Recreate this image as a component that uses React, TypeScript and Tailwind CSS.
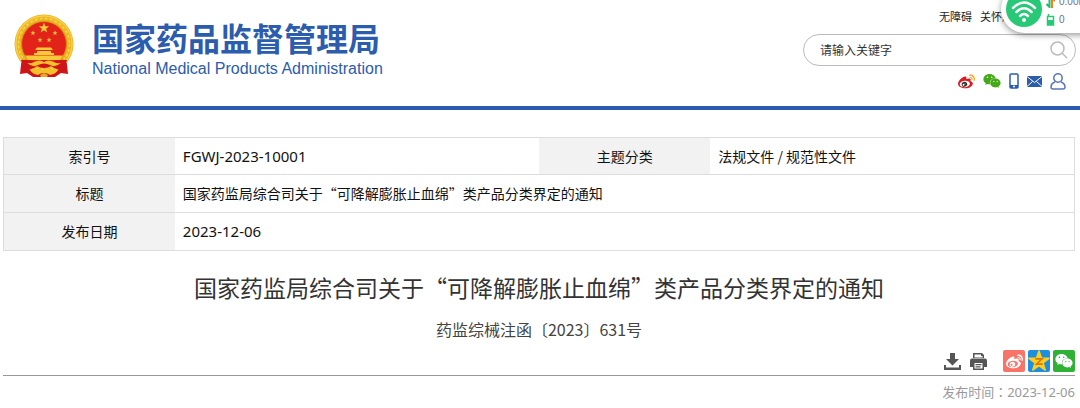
import React from "react";
import { FaWeixin } from "react-icons/fa";

type Row = {
  label: string;
  value: string;
};

const rows: Row[] = [
  { label: "标题", value: "国家药监局综合司关于“可降解膨胀止血绵”类产品分类界定的通知" },
];

const thClass = "w-[16%] bg-[#f2f2f2] text-center font-normal";
const tdClass = "px-2";
const latinClass = "font-['Noto_Sans','Noto_Sans_CJK_SC',sans-serif] text-[15px]";

const WEIBO_WAVES =
  "M407 177.6c7.6-24-13.4-46.8-37.4-41.7-22 4.8-28.8-28.1-7.1-32.8 50.1-10.9 92.3 37.1 76.5 84.8-6.8 21.2-38.8 10.8-32-10.3zM347.9 35.1c-25.9 5.6-16.8 43.7 8.3 38.3 72.3-15.2 134.8 52.8 111.7 124-7.4 24.2 29.1 37 37.4 12 31.9-99.8-55.1-195.9-157.4-174.3z";
const WEIBO_BODY =
  "M214.8 446.7C108.5 446.7 0 395.3 0 310.4c0-44.3 28-95.4 76.3-143.7C176 67 279.5 65.8 249.9 161c-4 13.1 12.3 5.7 12.3 6 79.5-33.6 140.5-16.8 114 51.4-3.7 9.4 1.1 10.9 8.3 13.1 135.7 42.3 34.8 215.2-169.7 215.2z";

type WeiboProps = {
  size: number;
  body: string;
  waves: string;
  eye: string;
  iris: string;
};

const WeiboIcon = ({ size, body, waves, eye, iris }: WeiboProps) => (
  <svg width={size} height={size} viewBox="0 20 512 440">
    <path d={WEIBO_BODY} fill={body} />
    <path d={WEIBO_WAVES} fill={waves} />
    <ellipse cx="205" cy="314" rx="154" ry="98" fill={eye} transform="rotate(-6 205 314)" />
    <ellipse cx="194" cy="324" rx="84" ry="74" fill={iris} transform="rotate(-20 194 324)" />
    <circle cx="168" cy="340" r="29" fill={eye} />
    <circle cx="214" cy="310" r="13" fill={eye} />
  </svg>
);

const STAR = "M0 -10L2.4 -3.2L9.5 -3.1L3.8 1.2L5.9 8.1L0 4L-5.9 8.1L-3.8 1.2L-9.5 -3.1L-2.4 -3.2Z";

const Emblem = () => (
  <svg className="h-[64px] w-[62px] shrink-0" viewBox="0 0 62 64">
    <path d="M9 42L7 60L14 59L20 63H42L48 59L55 60L53 42Z" fill="#cf1519" />
    <circle cx="31" cy="30" r="29.5" fill="#edb322" />
    <circle cx="31" cy="30" r="28" fill="none" stroke="#f8d044" strokeWidth="1.5" />
    <circle cx="31" cy="30" r="25.5" fill="none" stroke="#f9d653" strokeWidth="1.5" strokeDasharray="3 2" />
    <circle cx="31" cy="30" r="22.5" fill="#e2231a" stroke="#d9920f" strokeWidth="1" />
    <g fill="#f8c93a">
      <path d={STAR} transform="translate(31 14) scale(.55)" />
      <path d={STAR} transform="translate(20 19) scale(.27)" />
      <path d={STAR} transform="translate(42 19) scale(.27)" />
      <path d={STAR} transform="translate(27 26) scale(.27)" />
      <path d={STAR} transform="translate(36 26) scale(.27)" />
      <path d="M24 33.500H38L40 36H22Z" />
      <path d="M24 37H38V39H41V41H21V39H24Z" />
      <path d="M12 41.500H50L47 46H15Z" />
    </g>
    <path d="M8 46Q18 45 23 49Q31 43 39 49Q44 45 54 46L51 56Q43 56 38 52Q31 56 24 52Q19 56 11 56Z" fill="#cf1519" />
    <path d="M21 48Q27 45 31 48Q35 45 41 48Q44 50 48 49Q42 54 37 51Q31 48 25 51Q20 54 14 49Q18 50 21 48Z" fill="#f6c02b" />
    <path d="M17 56Q26 53 31 57Q36 53 45 56Q43 60 37 61Q31 56 25 61Q19 60 17 56Z" fill="#f6c02b" />
    <path d="M27 61Q31 58 35 61L34 63H28Z" fill="#e8a91e" />
  </svg>
);

const NetMonitor = () => (
  <div className="absolute top-[-15px] right-[-10px] flex h-12 w-[89px] items-center rounded-l-full bg-white pl-[5px] shadow-[0_2px_6px_rgba(0,0,0,0.4)]">
    <svg className="h-[36px] w-[36px] shrink-0" viewBox="0 0 36 36">
      <circle cx="18" cy="18" r="18" fill="#27c977" />
      <g fill="none" stroke="#fff" strokeWidth="2.5" strokeLinecap="round">
        <path d="M7 17Q18 6 29 17" />
        <path d="M10.500 21Q18 13.500 25.500 21" />
        <path d="M14 25Q18 21 22 25" />
      </g>
      <circle cx="18" cy="29" r="2" fill="#fff" />
    </svg>
    <div className="ml-1 flex flex-col gap-1 pt-1 font-['Liberation_Sans',sans-serif] text-[10px] leading-[14px] text-gray-500">
      <span className="flex items-center gap-1">
        <svg width="9" height="12" viewBox="0 0 9 12">
          <path d="M3.500 0V11L.5 8" fill="none" stroke="#27b96b" strokeWidth="2" />
          <path d="M6 12V2L9 5" fill="none" stroke="#f57c1f" strokeWidth="2" />
        </svg>
        0.00K
      </span>
      <span className="flex items-center gap-1">
        <svg width="9" height="12" viewBox="0 0 9 12">
          <path d="M2.500 0V2M1.500 2.500H7.500V11H1.500Z" fill="none" stroke="#27c977" strokeWidth="1.500" />
          <path d="M1 6H8V11H1Z" fill="#27c977" />
        </svg>
        0
      </span>
    </div>
  </div>
);

const Header = () => (
  <header className="relative flex h-[110px] items-start justify-between overflow-hidden border-b-4 border-[#2b5cad] pr-1 pl-[13px]">
    <a href="#" className="flex items-start gap-[17px] pt-[14px] text-[#2b5cad]">
      <Emblem />
      <span className="flex flex-col">
        <span className="text-[32px] leading-[46px] font-bold">国家药品监督管理局</span>
        <span className="font-['Liberation_Sans',sans-serif] text-[16px] leading-[18px]">
          National Medical Products Administration
        </span>
      </span>
    </a>
    <div className="flex w-[273px] flex-col">
      <nav className="flex gap-2 pt-2 pl-[136px] text-[11px] leading-4 whitespace-nowrap text-[#222]">
        <a href="#">无障碍</a>
        <a href="#">关怀版</a>
      </nav>
      <form className="mt-[10px] flex h-8 items-center rounded-full border border-[#bbb] pr-[7px] pl-4">
        <input
          type="text"
          aria-label="请输入关键字"
          placeholder="请输入关键字"
          className="min-w-0 flex-1 text-[12px] outline-none placeholder:text-[#333]"
        />
        <button type="button" aria-label="搜索">
          <svg width="18" height="18" viewBox="0 0 18 18" fill="none" stroke="#bbb" strokeWidth="1.500">
            <circle cx="7.500" cy="7.500" r="6.500" />
            <path d="M12 12L17 17" />
          </svg>
        </button>
      </form>
      <div className="mt-[6px] flex items-center justify-end gap-2 pr-[10px]">
        <a href="#" aria-label="微博">
          <WeiboIcon size={17} body="#dd1a1f" waves="#f0a928" eye="#fff" iris="#333" />
        </a>
        <a href="#" aria-label="微信" className="text-[#45a818]">
          <FaWeixin size={18} />
        </a>
        <a href="#" aria-label="手机">
          <svg width="10" height="16" viewBox="0 0 10 16">
            <rect x="1" y="1" width="8" height="14" rx="1" fill="none" stroke="#2b5cad" strokeWidth="1.500" />
            <path d="M1 12H9V15H1Z" fill="#2b5cad" />
            <circle cx="5" cy="13.500" r="1" fill="#fff" />
          </svg>
        </a>
        <a href="#" aria-label="邮箱">
          <svg width="15" height="11" viewBox="0 0 15 11">
            <path d="M0 0H15V11H0Z" fill="#2b5cad" />
            <path d="M0 .5L7.500 6.500L15 .5M0 10.500L5.500 5.500M15 10.500L9.500 5.500" fill="none" stroke="#fff" />
          </svg>
        </a>
        <a href="#" aria-label="个人中心">
          <svg width="16" height="17" viewBox="0 0 16 17" fill="none" stroke="#5b75b8" strokeWidth="1.500">
            <circle cx="8" cy="5" r="4.200" />
            <path d="M5 9Q1 10.500 1 14Q1 16 3 16H13Q15 16 15 14Q15 10.500 11 9" />
          </svg>
        </a>
      </div>
    </div>
    <NetMonitor />
  </header>
);

const InfoTable = () => (
  <table className="w-full table-fixed border-collapse border border-[#ddd] text-[14px] text-[#111]">
    <tbody>
      <tr className="h-[37px] border-b border-[#ddd]">
        <th scope="row" className={thClass}>索引号</th>
        <td className={`${tdClass} ${latinClass} w-[34%]`}>FGWJ-2023-10001</td>
        <th scope="row" className={thClass}>主题分类</th>
        <td className={`${tdClass} w-[34%]`}>法规文件 / 规范性文件</td>
      </tr>
      {rows.map((row) => (
        <tr key={row.label} className="h-[38px] border-b border-[#ddd]">
          <th scope="row" className={thClass}>{row.label}</th>
          <td className={tdClass} colSpan={3}>{row.value}</td>
        </tr>
      ))}
      <tr className="h-[38px]">
        <th scope="row" className={thClass}>发布日期</th>
        <td className={`${tdClass} ${latinClass}`} colSpan={3}>2023-12-06</td>
      </tr>
    </tbody>
  </table>
);

const ShareBar = () => (
  <div className="flex items-center justify-end">
    <button type="button" aria-label="下载" className="mr-[9px]">
      <svg width="17" height="17" viewBox="0 0 17 17" fill="#555">
        <path d="M6 0H11V6H15L8.500 12.500L2 6H6Z" />
        <path d="M0 12H2V14.500H15V12H17V17H0Z" />
      </svg>
    </button>
    <button type="button" aria-label="打印" className="mr-4">
      <svg width="17" height="17" viewBox="0 0 17 17" fill="#555">
        <path d="M3 0H12L14 2V5H3Z" />
        <path d="M4.500 1.500H11V3H12.500V4.500H4.500Z" fill="#fff" />
        <path d="M2 5.500H15Q17 5.500 17 7.500V14H0V7.500Q0 5.500 2 5.500Z" />
        <path d="M3 9.500H14V17H3Z" />
        <path d="M4.500 10H12.500V15.500H4.500Z" fill="#fff" />
        <path d="M5.500 11H11.500V12.200H5.500ZM5.500 13.300H10.500V14.500H5.500Z" />
      </svg>
    </button>
    <div className="flex gap-[3px]">
      <a href="#" aria-label="分享到微博" className="flex h-[22px] w-[22px] items-center justify-center rounded-xs bg-[#f87468]">
        <WeiboIcon size={17} body="#fff" waves="#fff" eye="#f87468" iris="#fff" />
      </a>
      <a href="#" aria-label="分享到QQ空间" className="flex h-[22px] w-[22px] items-center justify-center rounded-xs bg-[#1c8fe0]">
        <svg width="22" height="22" viewBox="-10.500 -11 21 21">
          <path d={STAR} fill="#ffce1f" stroke="#ffce1f" strokeWidth="1.500" strokeLinejoin="round" />
          <path d="M-3.500 -2.500H3L-2.500 2.500H3.500" fill="none" stroke="#d9780c" strokeWidth="1.500" />
        </svg>
      </a>
      <a href="#" aria-label="分享到微信" className="flex h-[22px] w-[22px] items-center justify-center rounded-xs bg-[#2fb135] text-white">
        <FaWeixin size={18} />
      </a>
    </div>
  </div>
);

const App = () => {
  return (
    <div className="bg-white font-['Noto_Sans_CJK_SC',sans-serif]">
      <Header />
      <main className="pt-[27px] pr-[5px] pl-[3px]">
        <InfoTable />
        <h1 className="mt-[18px] text-center text-[23px] leading-9 text-[#333]">
          国家药监局综合司关于“可降解膨胀止血绵”类产品分类界定的通知
        </h1>
        <p className="mt-3 text-center text-[16px] leading-6 text-[#444]">药监综械注函〔2023〕631号</p>
        <div className="mt-[9px] border-b border-[#999] pb-[3px]">
          <ShareBar />
        </div>
        <p className="mt-[6px] text-right font-['Noto_Sans','Noto_Sans_CJK_TC',sans-serif] text-[13px] leading-5 text-[#999]">
          发布时间：2023-12-06
        </p>
      </main>
    </div>
  );
};

export default App;
